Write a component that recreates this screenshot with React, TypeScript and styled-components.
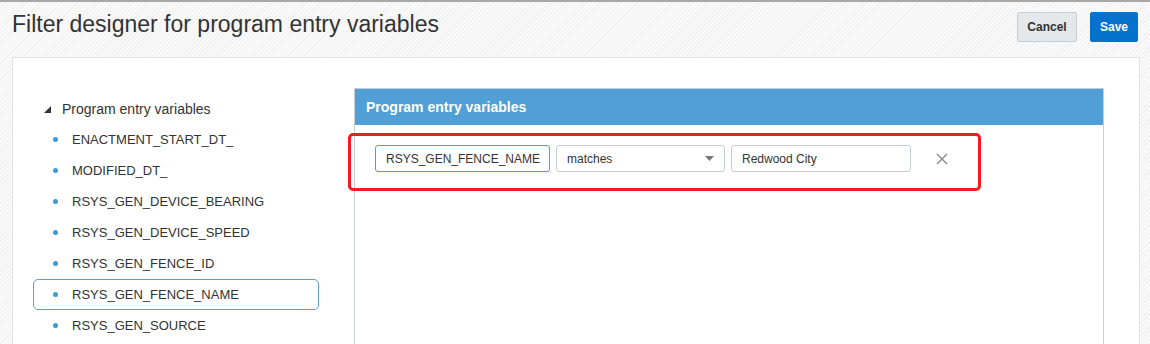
import styled, { createGlobalStyle } from 'styled-components';

const GlobalStyle = createGlobalStyle`
  html, body {
    margin: 0;
    padding: 0;
    height: 344px;
    overflow: hidden;
  }
  body {
    font-family: "Liberation Sans", Arial, sans-serif;
    color: #333;
    background-color: #f7f7f7;
    background-image: repeating-linear-gradient(
      -45deg,
      #f0f0f0 0px,
      #f0f0f0 1px,
      #fafafa 1px,
      #fafafa 3px
    );
  }
`;

// CSS
const Page = styled.div`
  height: 344px;
  border-top: 2px solid #a8a8a8;
  box-sizing: border-box;
`;

const Header = styled.div`
  height: 55px;
  display: flex;
  justify-content: space-between;
  align-items: flex-start;
  padding: 0 12px;
`;

const Title = styled.h1`
  margin: 9px 0 0;
  font-size: 23px;
  font-weight: normal;
  color: #333;
`;

const ButtonBar = styled.div`
  display: flex;
  gap: 13px;
  margin-top: 10px;
`;

const Button = styled.button<{ $primary?: boolean; $width: number }>`
  width: ${(p) => p.$width}px;
  height: 30px;
  padding: 0;
  font-family: "Liberation Sans", Arial, sans-serif;
  font-size: 12px;
  font-weight: bold;
  border-radius: 2px;
  border: 1px solid ${(p) => (p.$primary ? '#0572ce' : '#c4ced7')};
  background: ${(p) => (p.$primary ? '#0572ce' : '#e4e8ea')};
  color: ${(p) => (p.$primary ? '#fff' : '#333')};
`;

const Card = styled.div`
  margin: 0 10px 0 12px;
  height: 300px;
  display: flex;
  padding: 30px 35px 0 20px;
  background: #fff;
  border: 1px solid #dfe3e6;
  box-sizing: border-box;
`;

const Tree = styled.div`
  width: 286px;
  padding-top: 5px;
  display: flex;
  flex-direction: column;
`;

const TreeRow = styled.div<{ $selected?: boolean }>`
  height: 31px;
  display: flex;
  align-items: center;
  box-sizing: border-box;
  border: 1px solid ${(p) => (p.$selected ? '#5a9bd5' : 'transparent')};
  border-radius: 5px;
  padding-left: 10px;
  font-size: 13px;
`;

const Triangle = styled.span`
  width: 0;
  height: 0;
  border-left: 7px solid transparent;
  border-bottom: 7px solid #333;
  margin-right: 11px;
  margin-top: 1px;
`;

const Label = styled.span`
  font-size: 14px;
`;

const Bullet = styled.span`
  width: 5px;
  height: 5px;
  border-radius: 50%;
  background: #3b9ad9;
  margin-left: 9px;
  margin-right: 14px;
`;

const Panel = styled.div`
  position: relative;
  margin-left: 35px;
  flex: 1;
  border: 1px solid #c4ced7;
  border-bottom: none;
`;

const PanelHeader = styled.div`
  height: 36px;
  display: flex;
  align-items: center;
  padding-left: 11px;
  background: #509fd6;
  color: #fff;
  font-size: 14px;
  font-weight: bold;
`;

const FilterRow = styled.div`
  display: flex;
  align-items: center;
  padding: 20px 0 0 20px;
  gap: 6px;
`;

const Field = styled.div<{ $width: number; $active?: boolean }>`
  width: ${(p) => p.$width}px;
  height: 27px;
  box-sizing: border-box;
  display: flex;
  align-items: center;
  justify-content: space-between;
  padding: 0 10px;
  border: 1px solid ${(p) => (p.$active ? '#4a9fd8' : '#c4ced7')};
  border-radius: 3px;
  font-size: 12px;
  color: #333;
  background: #fff;
`;

const Remove = styled.span`
  display: flex;
  margin-left: 19px;
`;

const Highlight = styled.div`
  position: absolute;
  left: -7px;
  top: 44px;
  width: 633px;
  height: 58px;
  box-sizing: border-box;
  border: 3px solid #f31b1b;
  border-radius: 5px;
  pointer-events: none;
`;

const variables = [
  'ENACTMENT_START_DT_',
  'MODIFIED_DT_',
  'RSYS_GEN_DEVICE_BEARING',
  'RSYS_GEN_DEVICE_SPEED',
  'RSYS_GEN_FENCE_ID',
  'RSYS_GEN_FENCE_NAME',
  'RSYS_GEN_SOURCE',
];

const App = () => {
  return (
    <Page>
      <GlobalStyle />
      <Header>
        <Title>Filter designer for program entry variables</Title>
        <ButtonBar>
          <Button $width={60}>Cancel</Button>
          <Button $width={48} $primary>
            Save
          </Button>
        </ButtonBar>
      </Header>
      <Card>
        <Tree>
          <TreeRow>
            <Triangle />
            <Label>Program entry variables</Label>
          </TreeRow>
          {variables.map((name) => (
            <TreeRow key={name} $selected={name === 'RSYS_GEN_FENCE_NAME'}>
              <Bullet />
              {name}
            </TreeRow>
          ))}
        </Tree>
        <Panel>
          <PanelHeader>Program entry variables</PanelHeader>
          <FilterRow>
            <Field $width={175} $active>RSYS_GEN_FENCE_NAME</Field>
            <Field $width={169}>
              matches
              <svg width="9" height="5" viewBox="0 0 9 5">
                <path d="M0 0h9L4.5 5z" fill="#777" />
              </svg>
            </Field>
            <Field $width={180}>Redwood City</Field>
            <Remove>
              <svg width="12" height="12" viewBox="0 0 12 12">
                <path d="M1 1l10 10M11 1L1 11" stroke="#888" strokeWidth="1.4" />
              </svg>
            </Remove>
          </FilterRow>
          <Highlight />
        </Panel>
      </Card>
    </Page>
  );
};

export default App;
